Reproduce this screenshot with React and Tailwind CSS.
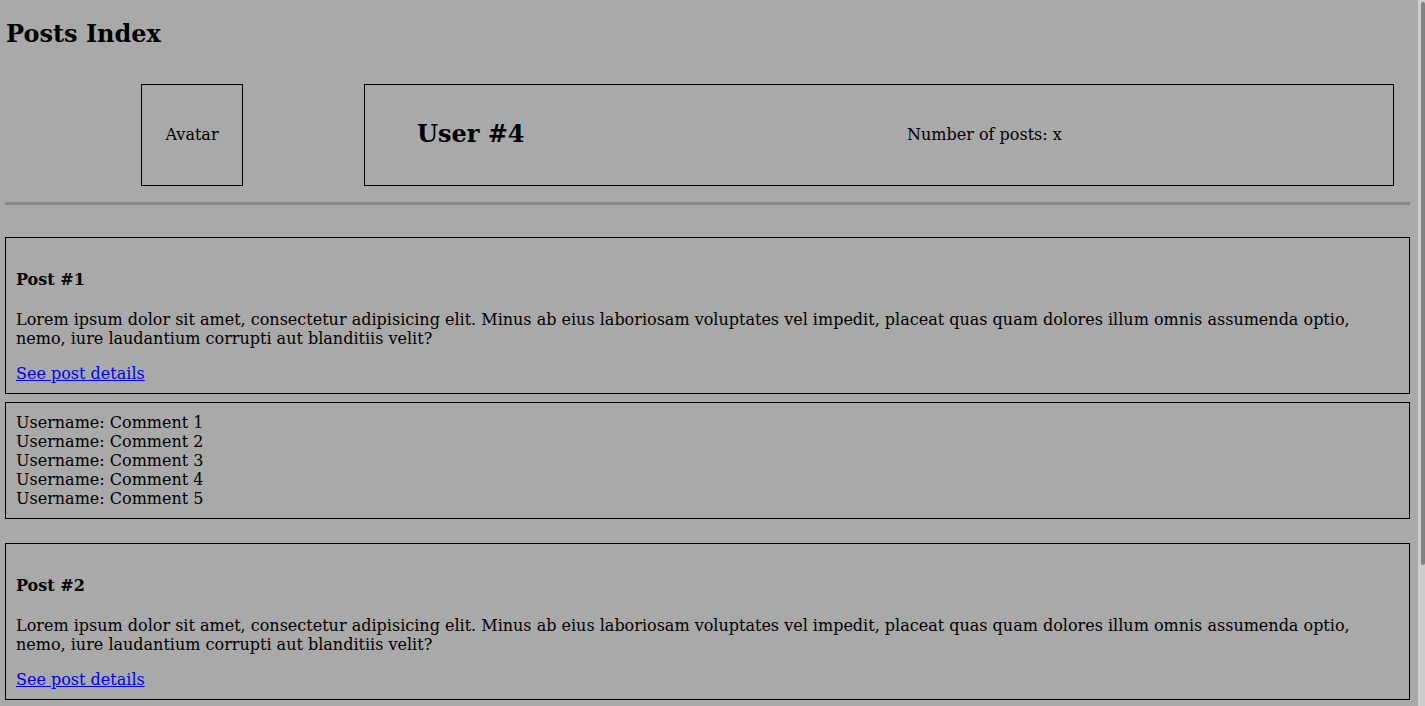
import React from 'react'

const lorem =
  'Lorem ipsum dolor sit amet, consectetur adipisicing elit. Minus ab eius laboriosam voluptates vel impedit, placeat quas quam dolores illum omnis assumenda optio, nemo, iure laudantium corrupti aut blanditiis velit?'

const posts = [1, 2]
const comments = [1, 2, 3, 4, 5]

const Post = ({ id, first }) => {
  return (
    <div className={first ? 'pt-[32px]' : 'pt-[24px]'}>
      <div className="border border-black px-[10px] py-[10px]">
        <h4 className="mt-[22px] text-[16px] font-bold">Post #{id}</h4>
        <p className="mt-[21px] mb-[16px]">{lorem}</p>
        <a href="#" className="text-[#0000ee] underline">
          See post details
        </a>
      </div>
      <div className="mt-[8px] border border-black px-[10px] py-[10px]">
        {comments.map(c => (
          <div key={c}>Username: Comment {c}</div>
        ))}
      </div>
    </div>
  )
}

const App = () => {
  return (
    <div
      className="h-screen flex overflow-hidden bg-[#a9a9a9] text-black text-[16px] leading-[19px]"
      style={{ fontFamily: '"DejaVu Serif", serif' }}
    >
      <div className="flex-1 overflow-hidden pl-[5px] pr-[8px] pb-[33px]">
        <h2 className="pt-[20px] pl-[1px] text-[24px] leading-[28px] font-bold">Posts Index</h2>

        <div className="mt-[36px] flex">
          <div className="ml-[136px] w-[102px] h-[102px] pb-[2px] border border-black flex items-center justify-center">
            Avatar
          </div>
          <div className="ml-[121px] flex-1 mr-[16px] h-[102px] pb-[2px] border border-black flex items-center pl-[52px]">
            <div className="w-[490px] text-[24px] font-bold leading-[28px]">User #4</div>
            <div>Number of posts: x</div>
          </div>
        </div>

        <div className="mt-[16px] h-[3px] bg-[#888888]"></div>

        {posts.map(p => (
          <Post key={p} id={p} first={p === 1} />
        ))}
      </div>

      {/* scrollbar */}
      <div className="w-[7px] shrink-0 bg-[#cccccc] pt-[2px]">
        <div className="ml-[3px] h-[563px] bg-[#808080] rounded-[2px]"></div>
      </div>
    </div>
  )
}

export default App
